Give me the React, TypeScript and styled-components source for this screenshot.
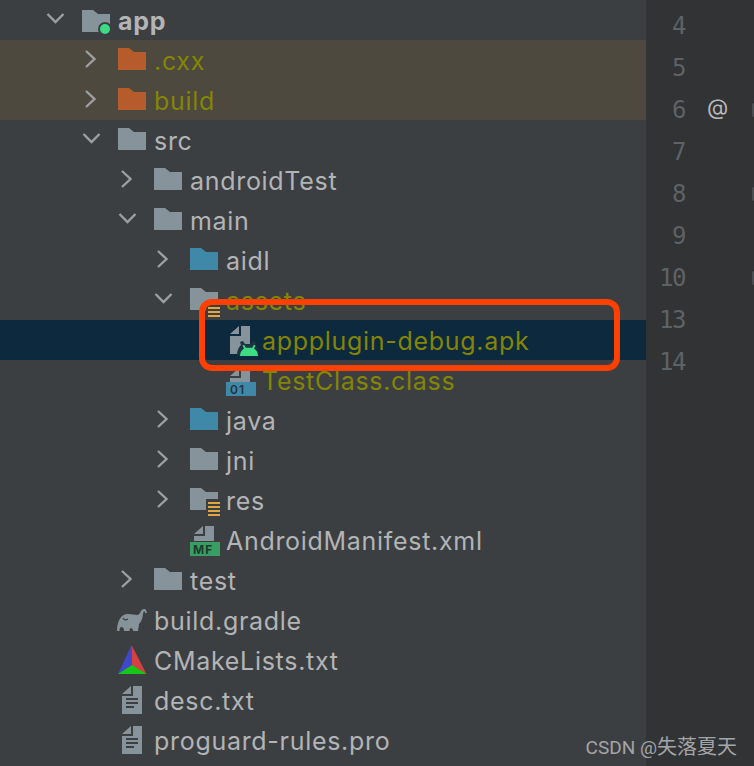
import styled, { createGlobalStyle } from "styled-components";

const Global = createGlobalStyle`
    html, body {
        margin: 0;
        padding: 0;
        background: #3c3f41;
    }
`;

const Page = styled.div`
    position: relative;
    display: flex;
    width: 754px;
    height: 766px;
    overflow: hidden;
`;

const Tree = styled.div`
    position: relative;
    width: 646px;
    flex: none;
    background: #3c3f41;
`;

const Row = styled.div<{ $level: number; $tone?: "excluded" | "selected" }>`
    display: flex;
    align-items: flex-start;
    height: 40px;
    padding-left: ${(p) => 46 + p.$level * 36}px;
    background: ${(p) =>
        p.$tone === "excluded" ? "#4d493e" : p.$tone === "selected" ? "#0d293e" : "transparent"};
`;

const Slot = styled.svg`
    flex: none;
    display: block;
    width: 36px;
    height: 40px;
    overflow: visible;
`;

const Label = styled.span<{ $olive?: boolean; $bold?: boolean }>`
    font-family: Inter, "Open Sans", sans-serif;
    font-size: 25px;
    letter-spacing: 0.7px;
    line-height: 42px;
    white-space: nowrap;
    font-weight: ${(p) => (p.$bold ? 700 : 400)};
    color: ${(p) => (p.$olive ? "#848504" : "#b2b4b6")};
`;

const Highlight = styled.div`
    position: absolute;
    left: 199px;
    top: 299px;
    width: 421px;
    height: 72px;
    box-sizing: border-box;
    border: 6px solid #ff4000;
    border-radius: 13px;
`;

const Gutter = styled.div`
    flex: 1;
    padding-top: 5px;
    background: #313335;
`;

const GutterRow = styled.div`
    display: flex;
    align-items: center;
    height: 42px;
`;

const LineNumber = styled.span`
    width: 39px;
    flex: none;
    text-align: right;
    font-family: "DejaVu Sans Mono", monospace;
    font-size: 24px;
    letter-spacing: -1.4px;
    color: #5f6265;
`;

const Marker = styled.span`
    width: 67px;
    flex: none;
    padding-left: 22px;
    box-sizing: border-box;
    font-family: Inter, sans-serif;
    font-size: 22px;
    color: #b6b8ba;
    position: relative;
    top: -3px;
`;

const Fold = styled.span`
    width: 8px;
    height: 14px;
    flex: none;
    box-sizing: border-box;
    border: 2px solid #4b4e50;
    border-radius: 2px;
`;

const Watermark = styled.div`
    position: absolute;
    right: 17px;
    top: 734px;
    font-family: Roboto, "Noto Sans CJK SC", sans-serif;
    font-size: 19px;
    line-height: 24px;
    white-space: nowrap;
    color: #a3a5a6;
`;

const WatermarkName = styled.span`
    font-family: "Noto Sans CJK SC", sans-serif;
    font-size: 20px;
`;

const GREY = "#87939a";
const BLUE = "#3f88a8";
const ORANGE = "#b65b2b";
const GREEN = "#3ddc84";

type IconName =
    | "app" | "folder" | "excluded" | "source" | "assets" | "res"
    | "apk" | "class" | "manifest" | "gradle" | "cmake" | "text";

const folderPath = "M0 8h11l5 4h12v18H0z";

const filePath = (top: number, bottom: number) =>
    `M4 ${top + 8}L13 ${top}V${top + 8}H4zM15 ${top}h9V${bottom}H4V${top + 10}h11z`;

const Lines = ({ x, y, count }: { x: number; y: number; count: number }) => (
    <>
        <rect x={x - 2} y={y - 3} width={16} height={count * 4 + 4} fill="#3c3f41" />
        {Array.from({ length: count }, (_, i) => (
            <rect key={i} x={x} y={y + i * 4} width={12} height={2} fill="#e0a63f" />
        ))}
    </>
);

function Icon({ name }: { name: IconName }) {
    return (
        <Slot viewBox="0 0 36 40">
            {name === "app" && (
                <>
                    <path transform="translate(0 2)" d={folderPath} fill={GREY} />
                    <circle cx="23" cy="29" r="7" fill="#3c3f41" />
                    <circle cx="23" cy="29" r="5" fill={GREEN} />
                </>
            )}
            {name === "folder" && <path d={folderPath} fill={GREY} />}
            {name === "excluded" && <path d={folderPath} fill={ORANGE} />}
            {name === "source" && <path d={folderPath} fill={BLUE} />}
            {name === "assets" && (
                <>
                    <path d={folderPath} fill={GREY} />
                    <Lines x={18} y={27} count={3} />
                </>
            )}
            {name === "res" && (
                <>
                    <path d={folderPath} fill={GREY} />
                    <Lines x={18} y={22} count={4} />
                </>
            )}
            {name === "apk" && (
                <>
                    <path d={filePath(6, 34)} fill={GREY} />
                    <path d="M11 36c0-6 2-9 4-11l-1-3 3-1 2 3h6l2-3 3 1-1 3c2 2 4 5 4 11z" fill="#1d3444" />
                    <path d="M14 36c0-4 2-6 4-7.500l-1.500-3 1.500-.7 1.800 3h6.400l1.800-3 1.500.7-1.500 3c2 1.500 4 3.500 4 7.500z" fill={GREEN} />
                </>
            )}
            {name === "class" && (
                <>
                    <path d={filePath(8, 22)} fill={GREY} />
                    <rect x="0" y="22" width="30" height="14" fill={BLUE} />
                    <text x="4" y="34" fontFamily="Inter, sans-serif" fontSize="12" fontWeight="600" letterSpacing="1" fill="#24333c">01</text>
                </>
            )}
            {name === "manifest" && (
                <>
                    <path d={filePath(6, 21)} fill={GREY} />
                    <rect x="0" y="22" width="30" height="14" fill="#389e64" />
                    <text x="3" y="34" fontFamily="Inter, sans-serif" fontSize="12" fontWeight="700" letterSpacing="1" fill="#1f3a2b">MF</text>
                </>
            )}
            {name === "gradle" && (
                <>
                    <path
                        d="M-1 31C-1 21 3 14 10 14c4 0 7 1 9 1s3-2 4-4c1-2 4-3 5-1l1 3h-2c0-2-1-2-1.500-1-1 3-.5 8-4.500 12l-1 7h-5c0-2-1-3-2-3s-1.500 1-1.500 3H6c0-3-1-4-2.500-4S1.500 28 1.500 31z"
                        fill={GREY}
                    />
                    <path d="M5 18c1 2 3 2.500 5 1" fill="none" stroke="#3c3f41" strokeWidth="1.200" />
                </>
            )}
            {name === "cmake" && (
                <>
                    <path d="M13.500 5L0 34l14-8z" fill="#3f48c8" />
                    <path d="M13.500 5L28.500 34 14 26z" fill="#d6403f" />
                    <path d="M14 25L0 34h28.500z" fill="#17c717" />
                </>
            )}
            {name === "text" && (
                <>
                    <path d={filePath(6, 34)} fill={GREY} />
                    <path d="M8 19h12M8 23h12M8 27h8" stroke="#3c3f41" strokeWidth="2" />
                </>
            )}
        </Slot>
    );
}

function Chevron({ open }: { open?: boolean }) {
    return (
        <Slot viewBox="0 0 36 40">
            <path
                d={open ? "M1.500 14l8 8 8-8" : "M4 11l8.500 8-8.500 8"}
                fill="none"
                stroke="#9da0a2"
                strokeWidth="2.400"
            />
        </Slot>
    );
}

type TreeNode = {
    name: string;
    level: number;
    icon: IconName;
    open?: boolean;
    leaf?: boolean;
    olive?: boolean;
    bold?: boolean;
    tone?: "excluded" | "selected";
};

const nodes: TreeNode[] = [
    { name: "app", level: 0, icon: "app", open: true, bold: true },
    { name: ".cxx", level: 1, icon: "excluded", olive: true, tone: "excluded" },
    { name: "build", level: 1, icon: "excluded", olive: true, tone: "excluded" },
    { name: "src", level: 1, icon: "folder", open: true },
    { name: "androidTest", level: 2, icon: "folder" },
    { name: "main", level: 2, icon: "folder", open: true },
    { name: "aidl", level: 3, icon: "source" },
    { name: "assets", level: 3, icon: "assets", open: true, olive: true },
    { name: "appplugin-debug.apk", level: 4, icon: "apk", leaf: true, olive: true, tone: "selected" },
    { name: "TestClass.class", level: 4, icon: "class", leaf: true, olive: true },
    { name: "java", level: 3, icon: "source" },
    { name: "jni", level: 3, icon: "folder" },
    { name: "res", level: 3, icon: "res" },
    { name: "AndroidManifest.xml", level: 3, icon: "manifest", leaf: true },
    { name: "test", level: 2, icon: "folder" },
    { name: "build.gradle", level: 1, icon: "gradle", leaf: true },
    { name: "CMakeLists.txt", level: 1, icon: "cmake", leaf: true },
    { name: "desc.txt", level: 1, icon: "text", leaf: true },
    { name: "proguard-rules.pro", level: 1, icon: "text", leaf: true },
];

const gutterLines = [
    { n: 4 },
    { n: 5 },
    { n: 6, marker: "@", fold: true },
    { n: 7 },
    { n: 8, fold: true },
    { n: 9 },
    { n: 10, fold: true },
    { n: 13 },
    { n: 14 },
];

export default function App() {
    return (
        <Page>
            <Global />
            <Tree>
                {nodes.map((node) => (
                    <Row key={node.name} $level={node.level} $tone={node.tone}>
                        {node.leaf ? <Slot /> : <Chevron open={node.open} />}
                        <Icon name={node.icon} />
                        <Label $olive={node.olive} $bold={node.bold}>{node.name}</Label>
                    </Row>
                ))}
                <Highlight />
            </Tree>
            <Gutter>
                {gutterLines.map((line) => (
                    <GutterRow key={line.n}>
                        <LineNumber>{line.n}</LineNumber>
                        <Marker>{line.marker}</Marker>
                        {line.fold && <Fold />}
                    </GutterRow>
                ))}
            </Gutter>
            <Watermark>CSDN @<WatermarkName>失落夏天</WatermarkName></Watermark>
        </Page>
    );
}
